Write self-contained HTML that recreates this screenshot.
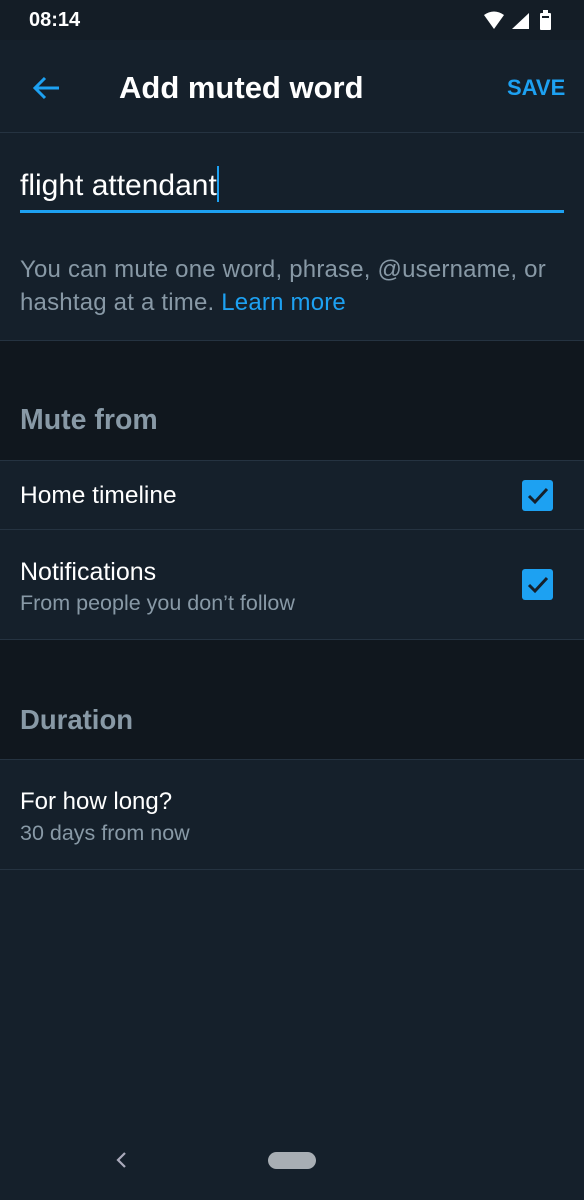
<!DOCTYPE html>
<html><head><style>
*{margin:0;padding:0;box-sizing:border-box}
body{width:584px;height:1200px;background:#15202b;font-family:"Liberation Sans",sans-serif;position:relative;overflow:hidden;color:#fff}
.a{position:absolute;white-space:nowrap}
.line{position:absolute;left:0;width:584px;height:1px;background:#253341}
.dark{position:absolute;left:0;width:584px;background:#10171e}
.cb{position:absolute;left:522px;width:31px;height:31px;background:#1da1f2;border-radius:3px}
</style></head><body>
<div class="a" style="left:0;top:0;width:584px;height:40px;background:#141d26"></div>
<div class="a" style="left:29px;top:9px;font-size:20px;font-weight:bold;color:#fff">08:14</div>
<svg class="a" style="left:482px;top:10px" width="78" height="22" viewBox="0 0 78 22"><path d="M2 5 Q12 -2 22 5 L12 19Z" fill="#fff"/><path d="M30 19 L47 19 L47 3Z" fill="#fff"/><rect x="58" y="3" width="11" height="17" rx="1" fill="#fff"/><rect x="61" y="0" width="5" height="3" fill="#fff"/><rect x="60" y="6" width="7" height="2" fill="#141d26"/></svg>
<svg class="a" style="left:30px;top:72px" width="32" height="32" viewBox="0 0 32 32"><path d="M29 16 H5 M15 6 L5 16 L15 26" stroke="#1da1f2" stroke-width="3" fill="none"/></svg>
<div class="a" style="left:119px;top:70px;font-size:31px;font-weight:bold">Add muted word</div>
<div class="a" style="left:507px;top:75px;font-size:22px;font-weight:bold;color:#1da1f2">SAVE</div>
<div class="line" style="top:132px"></div>
<div class="a" style="left:20px;top:166px;font-size:30px">flight attendant<span style="display:inline-block;width:2px;height:36px;background:#1da1f2;vertical-align:-7px"></span></div>
<div class="a" style="left:20px;top:210px;width:544px;height:3px;background:#1da1f2"></div>
<div class="a" style="left:20px;top:253px;font-size:24px;line-height:33px;color:#8899a6;letter-spacing:0.2px">You can mute one word, phrase, @username, or<br>hashtag at a time. <span style="color:#1da1f2">Learn more</span></div>
<div class="line" style="top:340px"></div>
<div class="dark" style="top:341px;height:119px"></div>
<div class="a" style="left:20px;top:404px;font-size:28.5px;font-weight:bold;color:#8899a6">Mute from</div>
<div class="line" style="top:460px"></div>
<div class="a" style="left:20px;top:482px;font-size:24.5px">Home timeline</div>
<div class="cb" style="top:480px"></div>
<svg class="a" style="left:522px;top:480px" width="31" height="31"><path d="M7 16 L13 22 L25 9" stroke="#15202b" stroke-width="3" fill="none"/></svg>
<div class="line" style="top:529px"></div>
<div class="a" style="left:20px;top:558px;font-size:25px">Notifications</div>
<div class="a" style="left:20px;top:591px;font-size:21.5px;color:#8899a6">From people you don’t follow</div>
<div class="cb" style="top:569px"></div>
<svg class="a" style="left:522px;top:569px" width="31" height="31"><path d="M7 16 L13 22 L25 9" stroke="#15202b" stroke-width="3" fill="none"/></svg>
<div class="line" style="top:639px"></div>
<div class="dark" style="top:640px;height:119px"></div>
<div class="a" style="left:20px;top:704px;font-size:27.5px;font-weight:bold;color:#8899a6">Duration</div>
<div class="line" style="top:759px"></div>
<div class="a" style="left:20px;top:788px;font-size:24px">For how long?</div>
<div class="a" style="left:20px;top:821px;font-size:21.5px;color:#8899a6">30 days from now</div>
<div class="line" style="top:869px"></div>
<svg class="a" style="left:114px;top:1151px" width="16" height="18"><path d="M11 2 L4 9 L11 16" stroke="#aab" stroke-width="2.2" fill="none"/></svg>
<div class="a" style="left:268px;top:1152px;width:48px;height:17px;border-radius:9px;background:#a8aeb4"></div>
</body></html>
